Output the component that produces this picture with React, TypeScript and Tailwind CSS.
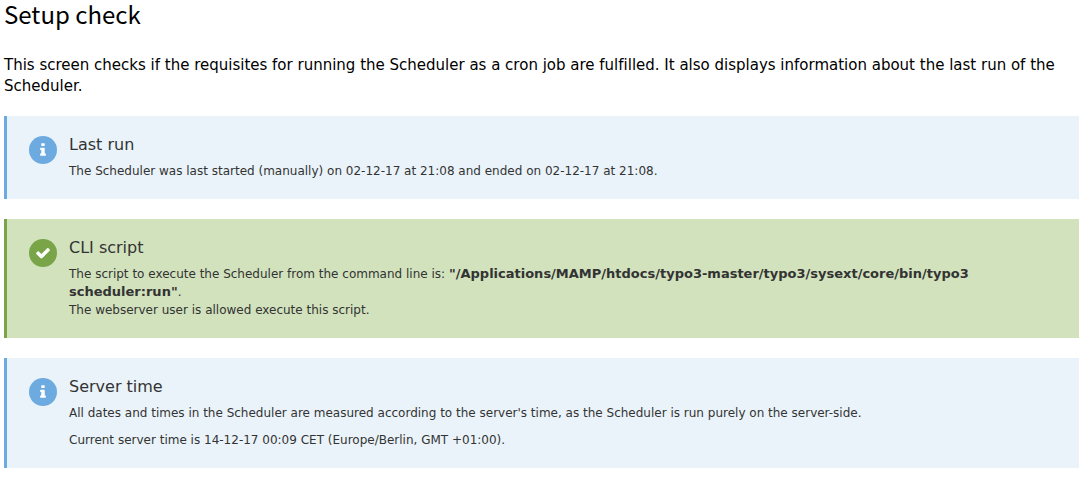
import type { ReactNode } from "react";

type CalloutProps = {
  kind: "info" | "success";
  title: string;
  children: ReactNode;
};

const styles = {
  info: {
    panel: "border-[#6daae0] bg-[#eaf3fa]",
    badge: "bg-[#6daae0]",
    icon: "M1216 1344v128q0 26-19 45t-45 19h-512q-26 0-45-19t-19-45v-128q0-26 19-45t45-19h64v-384h-64q-26 0-45-19t-19-45v-128q0-26 19-45t45-19h384q26 0 45 19t19 45v576h64q26 0 45 19t19 45zm-128-1152v192q0 26-19 45t-45 19h-256q-26 0-45-19t-19-45v-192q0-26 19-45t45-19h256q26 0 45 19t19 45z",
  },
  success: {
    panel: "border-[#79a548] bg-[#d1e2bd]",
    badge: "bg-[#79a548]",
    icon: "M1671 566q0 40-28 68l-724 724-136 136q-28 28-68 28t-68-28l-136-136-362-362q-28-28-28-68t28-68l136-136q28-28 68-28t68 28l294 295 656-657q28-28 68-28t68 28l136 136q28 28 28 68z",
  },
};

function Callout({ kind, title, children }: CalloutProps) {
  const { panel, badge, icon } = styles[kind];
  return (
    <section className={`flex gap-3 border-l-[3px] pb-[19px] pl-[22px] pr-5 pt-5 text-[#333] ${panel}`}>
      <span
        className={`flex size-7 shrink-0 items-center justify-center rounded-full text-white ${badge}`}
      >
        <svg viewBox="0 0 1792 1792" className="size-4" fill="currentColor" aria-hidden="true">
          <path d={icon} />
        </svg>
      </span>
      <div className="min-w-0 max-w-[910px]">
        <h2 className="mb-2 text-[16px] leading-[18px]">{title}</h2>
        <div className="space-y-[9px] text-[12px] leading-[18px]">{children}</div>
      </div>
    </section>
  );
}

export default function App() {
  return (
    <main className="bg-white pl-1 pr-1.5 font-['DejaVu_Sans',sans-serif] text-black [font-variant-ligatures:none]">
      <h1 className="font-['Noto_Sans_CJK_SC',sans-serif] text-[24px] leading-[28px]">Setup check</h1>
      <p className="mt-[27px] text-[15px] leading-[21px]">
        This screen checks if the requisites for running the Scheduler as a cron job are fulfilled.
        It also displays information about the last run of the Scheduler.
      </p>
      <div className="mt-[19px] space-y-5 pb-5">
        <Callout kind="info" title="Last run">
          <p>
            The Scheduler was last started (manually) on 02-12-17 at 21:08 and ended on 02-12-17 at
            21:08.
          </p>
        </Callout>
        <Callout kind="success" title="CLI script">
          <p>
            The script to execute the Scheduler from the command line is:{" "}
            <strong className="text-[13px]">
              "/Applications/MAMP/htdocs/typo3-master/typo3/sysext/core/bin/typo3 scheduler:run"
            </strong>
            .
            <br />
            The webserver user is allowed execute this script.
          </p>
        </Callout>
        <Callout kind="info" title="Server time">
          <p>
            All dates and times in the Scheduler are measured according to the server's time, as the
            Scheduler is run purely on the server-side.
          </p>
          <p>Current server time is 14-12-17 00:09 CET (Europe/Berlin, GMT +01:00).</p>
        </Callout>
      </div>
    </main>
  );
}
